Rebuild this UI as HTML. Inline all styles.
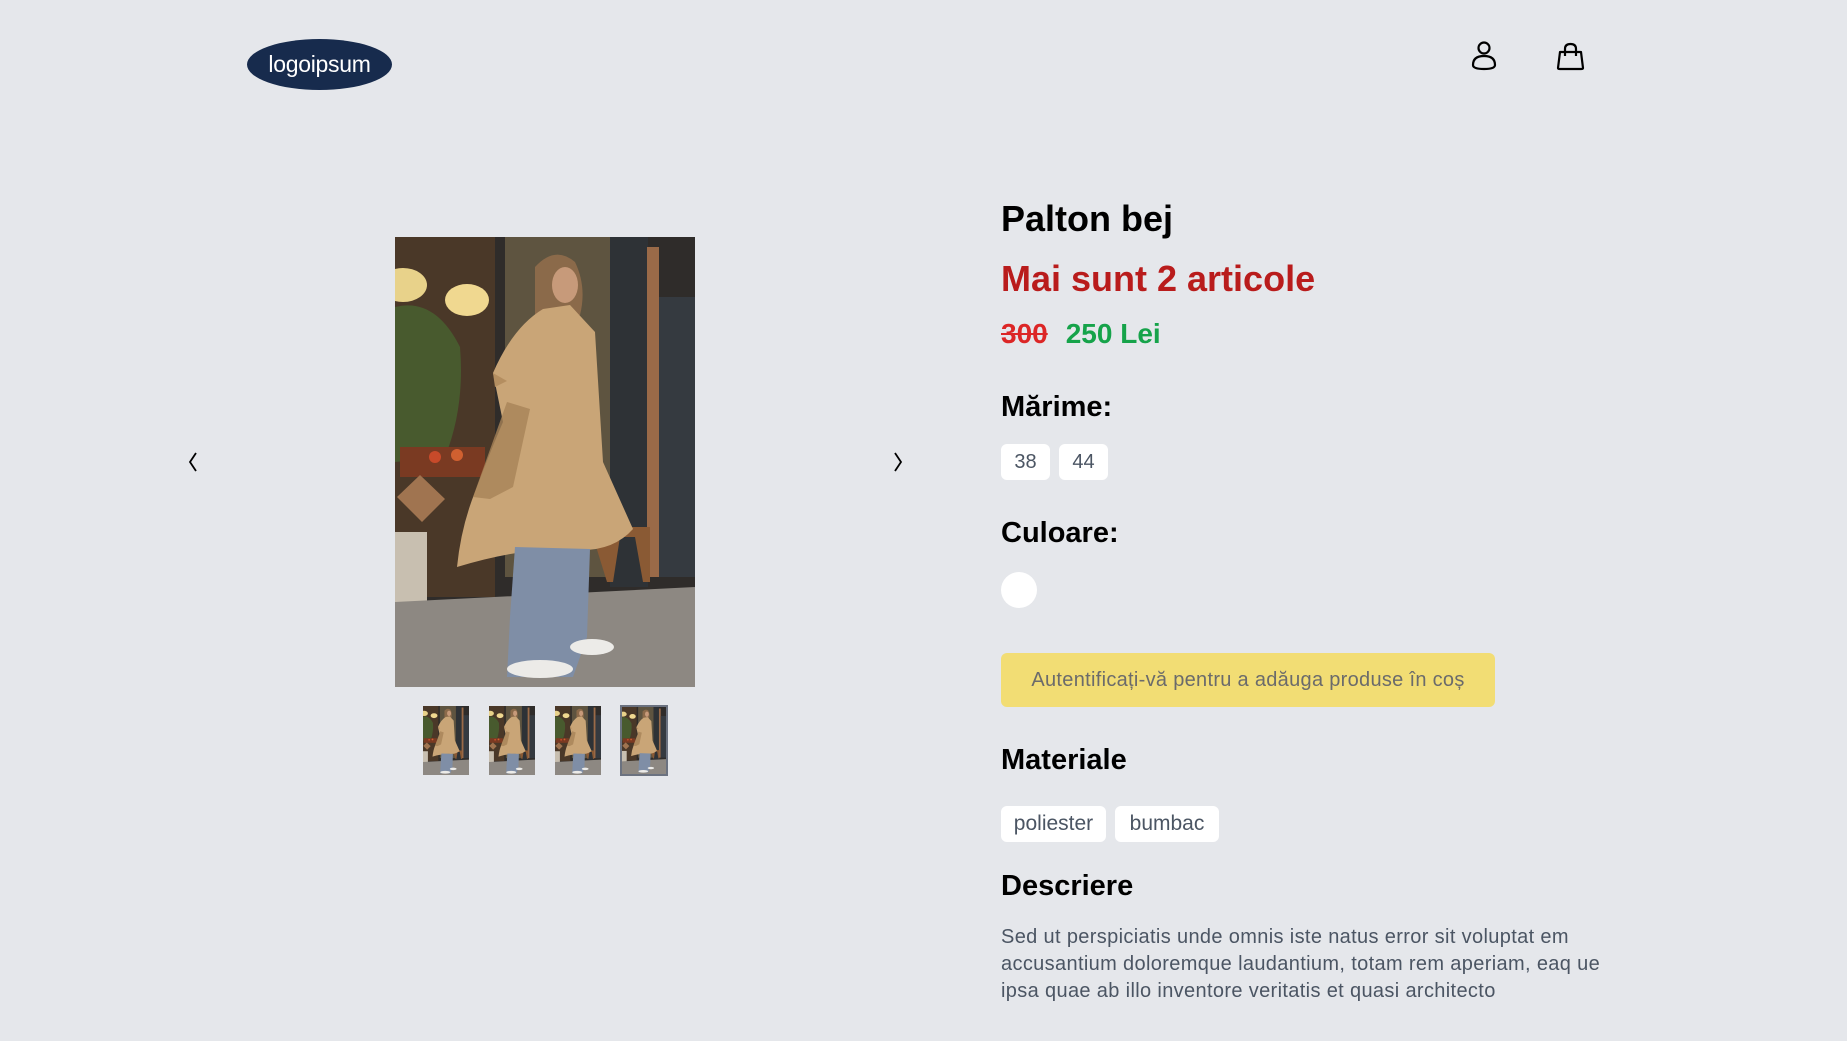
<!DOCTYPE html>
<html><head><meta charset="utf-8">
<style>
*{margin:0;padding:0;box-sizing:border-box}
html,body{width:1847px;height:1041px;overflow:hidden;background:#e5e7eb;font-family:"Liberation Sans",sans-serif}
.a{position:absolute}
.h{font-weight:700;color:#000}
.chip{position:absolute;background:#fff;border-radius:6px;color:#4b5563;display:flex;align-items:center;justify-content:center}
</style></head><body>
<svg width="0" height="0" style="position:absolute">
<defs>
<symbol id="photo" viewBox="0 0 300 450" preserveAspectRatio="none">
<rect width="300" height="450" fill="#2f2c2a"/>
<rect x="0" y="0" width="100" height="360" fill="#4a3828"/>
<rect x="110" y="0" width="105" height="340" fill="#5e5440"/>
<rect x="215" y="0" width="38" height="350" fill="#2e3236"/>
<rect x="252" y="10" width="12" height="330" fill="#9a6a48"/>
<rect x="264" y="60" width="36" height="280" fill="#353a40"/>
<ellipse cx="8" cy="48" rx="24" ry="17" fill="#e8d28a"/>
<ellipse cx="72" cy="63" rx="22" ry="16" fill="#f0d890"/>
<path d="M0 70 Q40 60 65 110 Q70 170 50 220 L0 225Z" fill="#485a2e"/>
<rect x="5" y="210" width="85" height="30" fill="#7a3a22"/>
<circle cx="40" cy="220" r="6" fill="#c84a2a"/><circle cx="62" cy="218" r="6" fill="#d06030"/>
<path d="M2 260 L25 238 L50 262 L27 285Z" fill="#a07450"/>
<rect x="0" y="295" width="32" height="105" fill="#c8bfb0"/>
<path d="M0 365 L300 350 L300 450 L0 450Z" fill="#8d8882"/>
<path d="M195 290 L255 290 L255 345 L248 345 L240 300 L225 300 L218 345 L212 345Z" fill="#8a5a34"/>
<path d="M140 30 Q160 8 180 25 Q192 50 185 78 L140 80Z" fill="#8b6a4a"/>
<ellipse cx="170" cy="48" rx="13" ry="18" fill="#c79a7a"/>
<path d="M148 72 L175 68 L200 95 L208 225 L238 292 Q215 318 170 312 Q120 312 62 330 Q66 290 80 255 Q95 215 108 185 L98 136 Q118 90 148 72Z" fill="#c9a577"/>
<path d="M98 136 L112 144 L100 150Z" fill="#b48e60"/>
<path d="M112 165 L135 172 L118 250 L95 262 L78 260 Z" fill="#a78358" opacity=".8"/>
<path d="M120 310 L195 312 L192 400 L178 440 L112 440 L115 380Z" fill="#7f8ea6"/>
<ellipse cx="145" cy="432" rx="33" ry="9" fill="#ecebe8"/>
<ellipse cx="197" cy="410" rx="22" ry="8" fill="#ecebe8"/>
</symbol>
</defs>
</svg>

<div class="a" style="left:247px;top:39px;width:145px;height:51px;border-radius:50%;background:#172b4d;color:#fff;font-size:23px;display:flex;align-items:center;justify-content:center;letter-spacing:-0.3px">logoipsum</div>

<svg class="a" style="left:1471px;top:40px" width="26" height="32" viewBox="0 0 26 32" fill="none" stroke="#000" stroke-width="2.2">
<circle cx="13" cy="8" r="5.5"/>
<path d="M2 25 Q2 16 13 16 Q24 16 24 25 Q24 29 13 29 Q2 29 2 25Z"/>
</svg>
<svg class="a" style="left:1556px;top:40px" width="29" height="32" viewBox="0 0 29 32" fill="none" stroke="#000" stroke-width="2.2" stroke-linejoin="round">
<path d="M4 12 L25 12 L27 28 Q27 29 25 29 L4 29 Q2 29 2 28Z"/>
<path d="M9 16 V9 Q9 4 14.5 4 Q20 4 20 9 V16"/>
</svg>

<svg class="a" style="left:188px;top:452px" width="10" height="20" viewBox="0 0 10 20" fill="none" stroke="#000" stroke-width="1.8"><path d="M8 1 L2 10 L8 19"/></svg>
<svg class="a" style="left:893px;top:452px" width="10" height="20" viewBox="0 0 10 20" fill="none" stroke="#000" stroke-width="1.8"><path d="M2 1 L8 10 L2 19"/></svg>

<svg class="a" style="left:395px;top:237px" width="300" height="450"><use href="#photo"/></svg>

<svg class="a" style="left:423px;top:706px" width="46" height="69"><use href="#photo" width="46" height="69"/></svg>
<svg class="a" style="left:489px;top:706px" width="46" height="69"><use href="#photo" width="46" height="69"/></svg>
<svg class="a" style="left:555px;top:706px" width="46" height="69"><use href="#photo" width="46" height="69"/></svg>
<div class="a" style="left:620px;top:705px;width:48px;height:71px;border:2px solid #6b7280"><svg width="44" height="67" style="display:block"><use href="#photo" width="44" height="67"/></svg></div>

<div class="a h" style="left:1001px;top:198px;font-size:36px;font-weight:600">Palton bej</div>
<div class="a" style="left:1001px;top:258px;font-size:36px;color:#b91c1c;font-weight:600">Mai sunt 2 articole</div>
<div class="a" style="left:1001px;top:318px;font-size:28px;font-weight:700"><span style="color:#dc2626;text-decoration:line-through">300</span><span style="color:#16a34a;margin-left:18px">250 Lei</span></div>

<div class="a h" style="left:1001px;top:391px;font-size:29px">Mărime:</div>
<div class="chip" style="left:1001px;top:444px;width:49px;height:36px;font-size:20px">38</div>
<div class="chip" style="left:1059px;top:444px;width:49px;height:36px;font-size:20px">44</div>

<div class="a h" style="left:1001px;top:517px;font-size:29px">Culoare:</div>
<div class="a" style="left:1001px;top:572px;width:36px;height:36px;border-radius:50%;background:#fff"></div>

<div class="a" style="left:1001px;top:653px;width:494px;height:54px;background:#f2dd74;border-radius:6px;color:#6b6b6b;font-size:20px;display:flex;align-items:center;justify-content:center;letter-spacing:0.3px">Autentificați-vă pentru a adăuga produse în coș</div>

<div class="a h" style="left:1001px;top:744px;font-size:29px;font-weight:600">Materiale</div>
<div class="chip" style="left:1001px;top:806px;width:105px;height:36px;font-size:21px">poliester</div>
<div class="chip" style="left:1115px;top:806px;width:104px;height:36px;font-size:21px">bumbac</div>

<div class="a h" style="left:1001px;top:870px;font-size:29px;font-weight:600">Descriere</div>
<div class="a" style="left:1001px;top:924px;font-size:20px;line-height:27px;color:#4b5563;white-space:nowrap;letter-spacing:0.35px">Sed ut perspiciatis unde omnis iste natus error sit voluptat em<br>accusantium doloremque laudantium, totam rem aperiam, eaq ue<br>ipsa quae ab illo inventore veritatis et quasi architecto</div>
</body></html>
